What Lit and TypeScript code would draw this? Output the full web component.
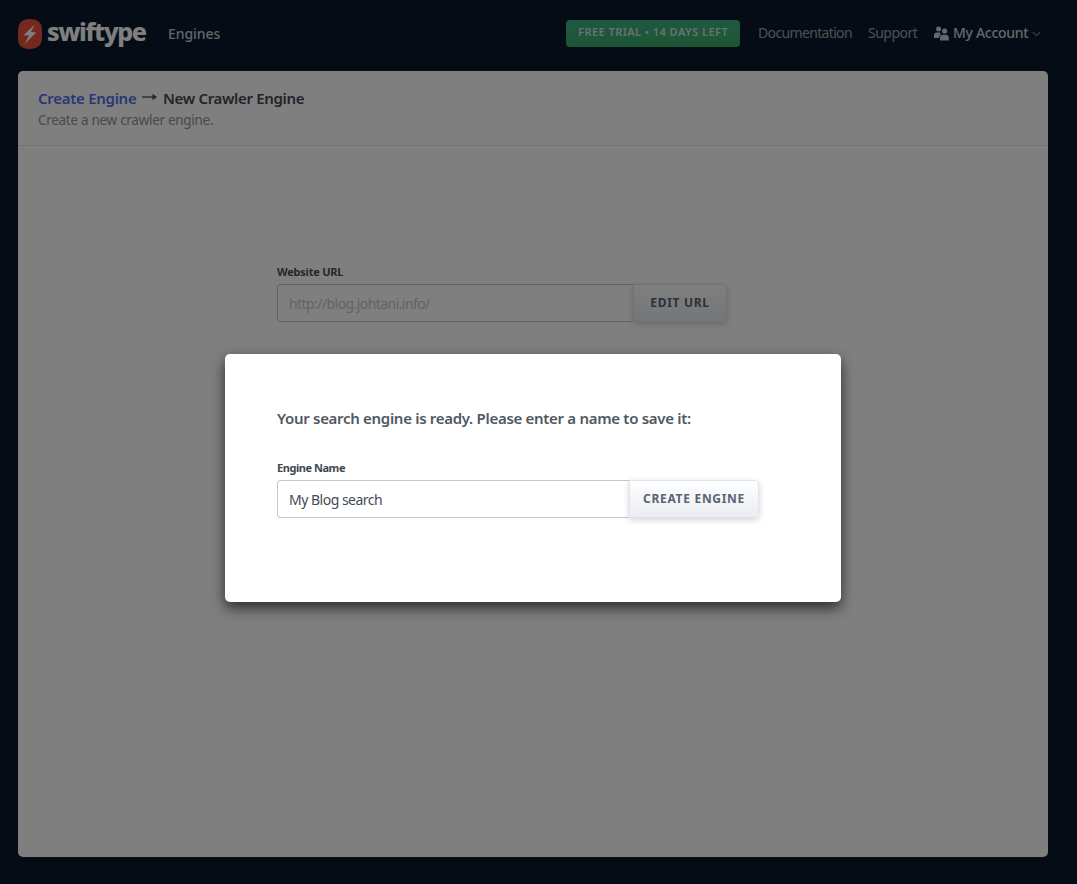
import { LitElement, html, css } from "lit";
import { customElement, property } from "lit/decorators.js";

@customElement("field-row")
class FieldRow extends LitElement {
  @property() label = "";
  @property() value = "";
  @property() action = "";
  @property({ type: Boolean, reflect: true }) muted = false;

  static styles = css`
    :host { display: block; }
    .label { font-size: 11px; line-height: 16px; font-weight: 700; color: #3f4750; white-space: nowrap; letter-spacing: var(--label-ls, -0.45px); }
    .row { display: flex; margin-top: 4px; height: 38px; }
    .box { box-sizing: border-box; width: var(--box-w, 352px); border: 1px solid #bfcad6; border-right: 0; border-radius: 4px 0 0 4px; padding: 1px 0 0 11px; line-height: 36px; font-size: 14px; color: #444b54; background: #fff; white-space: nowrap; letter-spacing: var(--value-ls, -0.5px); }
    .button { box-sizing: border-box; width: var(--button-w, 130px); border: 1px solid #e0e4ea; border-radius: 0 4px 4px 0; background: linear-gradient(#ffffff, #e9ecf1); box-shadow: 0 2px 6px rgba(0, 0, 0, 0.18); font: inherit; font-size: 12px; font-weight: 700; line-height: 35px; padding: 0 0 1px 0; color: #5a6472; letter-spacing: var(--button-ls, 0.7px); white-space: nowrap; }
    :host([muted]) .label { color: #4a5058; }
    :host([muted]) .box { color: #c4c7cb; }
  `;

  render() {
    return html`
      <div class="label">${this.label}</div>
      <div class="row">
        <div class="box">${this.value}</div>
        <button class="button">${this.action}</button>
      </div>`;
  }
}

@customElement("app-root")
class AppRoot extends LitElement {
  static styles = css`
    :host { display: block; position: relative; width: 1077px; height: 884px; overflow: hidden; background: #0d192d; font-family: "Noto Sans", sans-serif; }
    .header { display: flex; height: 71px; box-sizing: border-box; padding: 0 0 5px 18px; align-items: center; font-size: 14px; white-space: nowrap; }
    .logo { width: 24px; height: 30px; margin-top: 2px; }
    .brand { width: 121px; margin-left: 5px; margin-top: -4px; font-size: 25px; font-weight: 800; color: #fff; letter-spacing: -1.35px; }
    .engines { width: 398px; color: #c8cbd0; font-weight: 500; letter-spacing: -0.05px; }
    .trial { box-sizing: border-box; width: 174px; height: 27px; border-radius: 4px; background: linear-gradient(#3eb287, #3bab68); color: #cfe5d6; font-size: 11px; font-weight: 600; line-height: 24px; padding-left: 12px; letter-spacing: 0.46px; }
    .docs { width: 92px; margin: -2px 0 0 18px; color: #9da1a9; letter-spacing: -0.65px; }
    .support { width: 49px; margin: -2px 0 0 18px; color: #9da1a9; letter-spacing: -0.5px; }
    .people { width: 15px; height: 15px; margin-left: 17px; }
    .account { width: 75px; margin: -2px 0 0 4px; color: #ced1d6; font-weight: 500; letter-spacing: -0.3px; }
    .chevron { width: 9px; height: 6px; margin-left: 4px; margin-top: 2px; }
    .panel { width: 1030px; height: 786px; margin-left: 18px; border-radius: 5px; background: #fff; }
    .title { box-sizing: border-box; height: 75px; padding: 16px 20px 0; border-bottom: 1px solid #e3e6ec; }
    .crumbs { display: flex; align-items: center; height: 22px; font-size: 15px; font-weight: 600; color: #454a52; white-space: nowrap; letter-spacing: -0.33px; }
    .link { width: 98px; color: #5070e4; letter-spacing: -0.28px; }
    .arrow { width: 15px; height: 8px; margin: -3px 6px 0; }
    .sub { margin-top: 1px; font-size: 13.5px; line-height: 20px; color: #8b949e; letter-spacing: -0.29px; white-space: nowrap; }
    .url { margin: 118px 0 0 259px; --box-w: 356px; --button-w: 94px; --label-ls: -0.22px; --value-ls: -0.57px; }
    .overlay { position: absolute; inset: 0; background: rgba(0, 0, 0, 0.5); }
    .modal { position: absolute; left: 225px; top: 354px; width: 616px; height: 248px; box-sizing: border-box; padding: 52px 52px 0; border-radius: 5px; background: #fff; box-shadow: 0 6px 14px rgba(0, 0, 0, 0.65); }
    .ready { font-size: 15px; line-height: 24px; font-weight: 600; color: #505862; white-space: nowrap; margin-bottom: 30px; letter-spacing: -0.3px; }
  `;

  render() {
    return html`
      <div class="header">
        <svg class="logo" viewBox="0 0 24 30">
          <path fill="#e9533d" d="M12 0C20 0 24 4 24 11V18C24 26 20 30 11 30C3 30 0 26 0 19V12C0 4 4 0 12 0Z" />
          <path fill="#fff" d="M17 5.2L5.6 16.2L11 16.6L6.6 25L18.2 13.6L12.8 13Z" />
        </svg>
        <div class="brand">swiftype</div>
        <div class="engines">Engines</div>
        <div class="trial">FREE TRIAL • 14 DAYS LEFT</div>
        <div class="docs">Documentation</div>
        <div class="support">Support</div>
        <svg class="people" viewBox="0 0 15 15" fill="#ced1d6">
          <circle cx="4.6" cy="3.1" r="2.5" />
          <path d="M0 12V9.6Q0 6.6 3.2 6.6H6Q6.9 8.4 6.5 9Q5 10 5 12Z" />
          <circle cx="10.6" cy="5" r="2.6" />
          <path d="M6 14.5V12Q6 8.8 9.4 8.8H11.4Q14.8 8.8 14.8 12V14.5Z" />
        </svg>
        <div class="account">My Account</div>
        <svg class="chevron" viewBox="0 0 9 6" fill="none" stroke="#a9adb5"><path d="M.6 .8L4.5 4.8L8.4 .8" /></svg>
      </div>
      <div class="panel">
        <div class="title">
          <div class="crumbs">
            <span class="link">Create Engine</span>
            <svg class="arrow" viewBox="0 0 15 8"><path d="M0 4H12" stroke="#454a52" stroke-width="1.3" /><path d="M10.5 .8L15 4L10.5 7.2Z" fill="#454a52" /></svg>
            <span>New Crawler Engine</span>
          </div>
          <div class="sub">Create a new crawler engine.</div>
        </div>
        <field-row class="url" muted label="Website URL" value="http://blog.johtani.info/" action="EDIT URL"></field-row>
      </div>
      <div class="overlay"></div>
      <div class="modal">
        <div class="ready">Your search engine is ready. Please enter a name to save it:</div>
        <field-row label="Engine Name" value="My Blog search" action="CREATE ENGINE"></field-row>
      </div>`;
  }
}
